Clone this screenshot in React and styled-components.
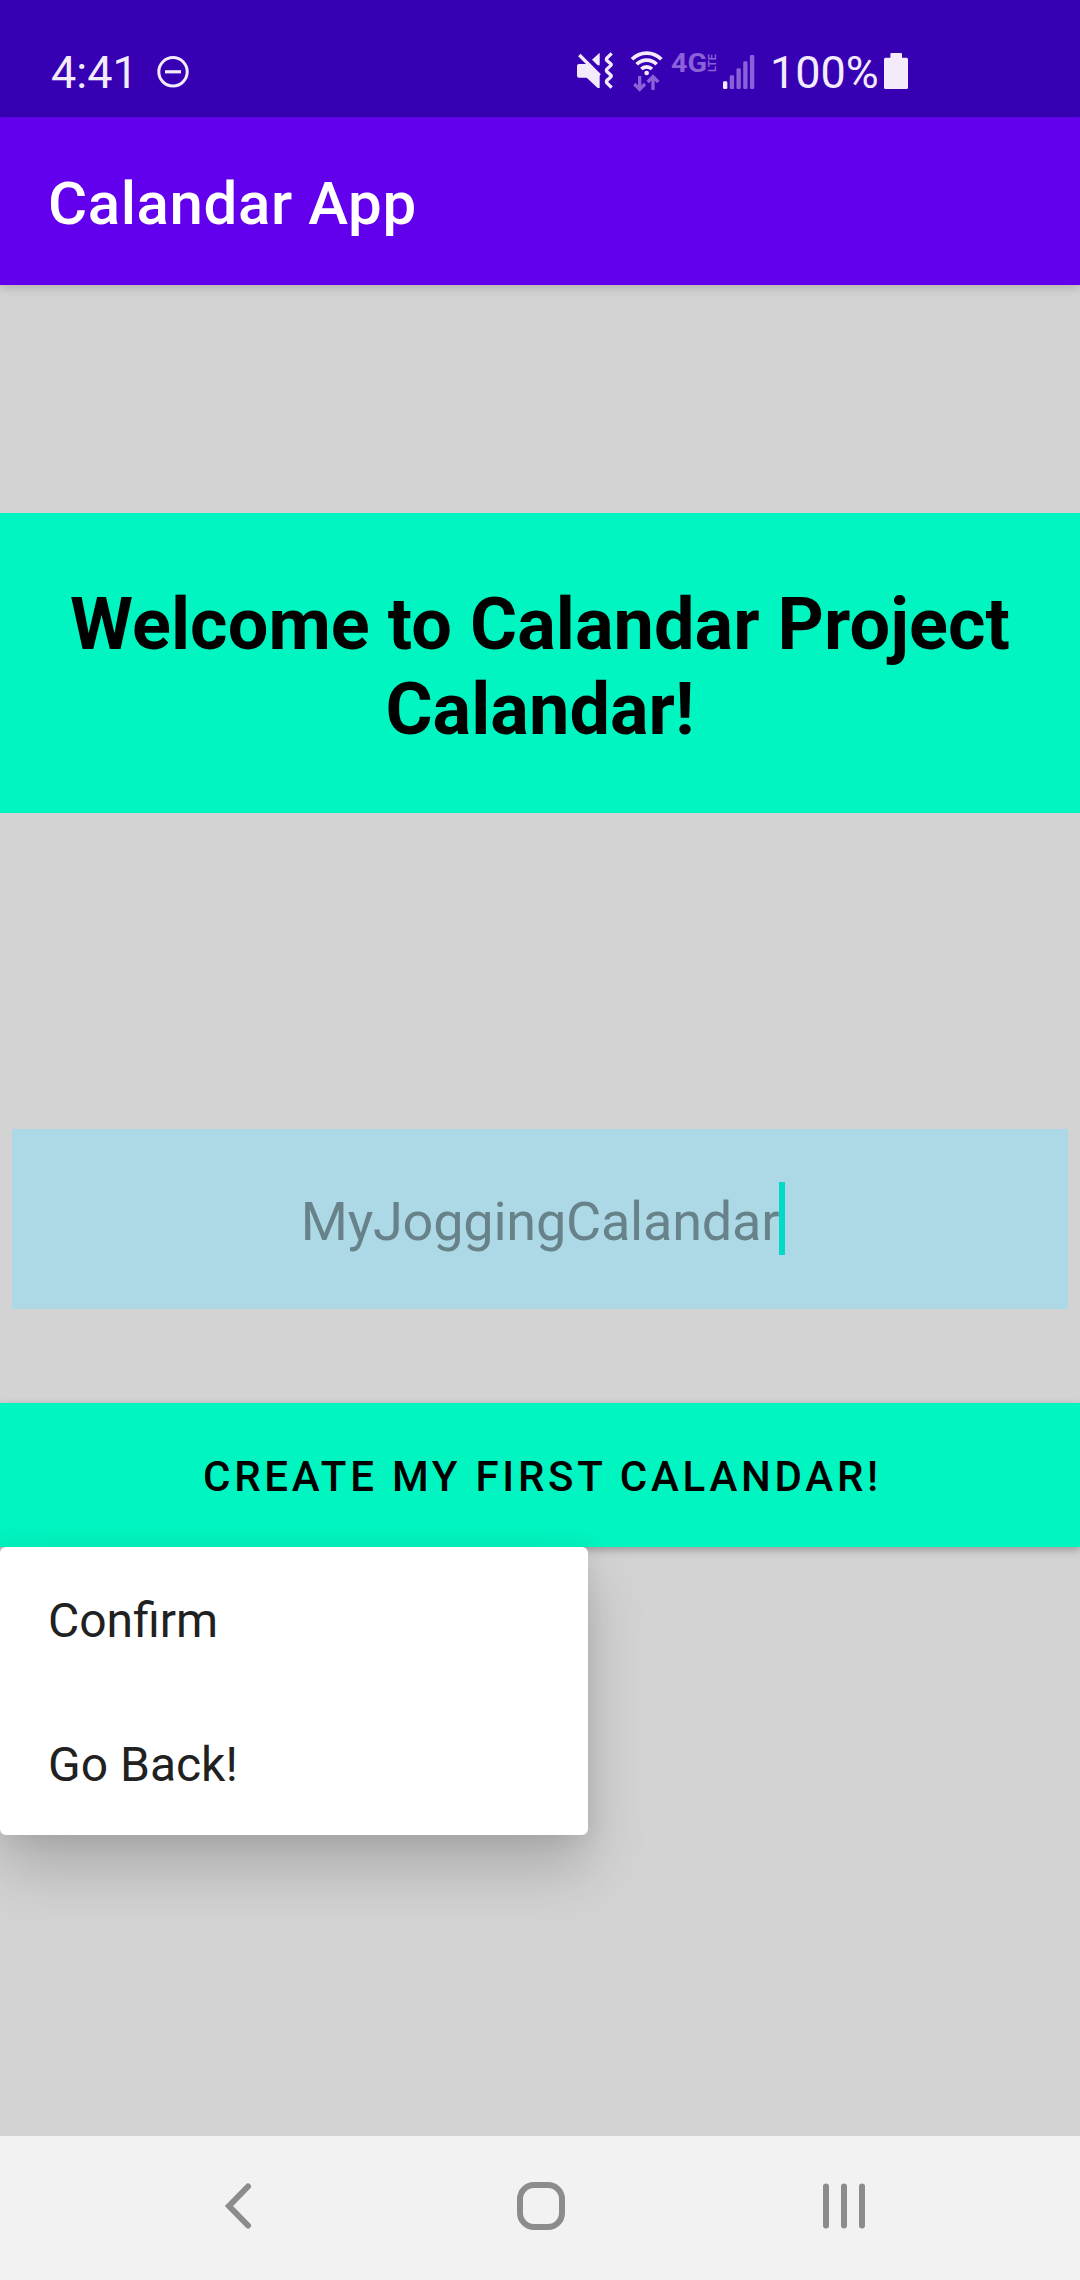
import React from "react";
import styled, { createGlobalStyle } from "styled-components";

const Global = createGlobalStyle`
  *, *::before, *::after { box-sizing: border-box; }
  body { margin: 0; background: #d3d3d3; }
  button { font: inherit; border: 0; margin: 0; }
`;

const Screen = styled.div`
  width: 1080px;
  height: 2280px;
  display: flex;
  flex-direction: column;
  overflow: hidden;
  background: #d3d3d3;
  font-family: Roboto, "Noto Sans", sans-serif;
`;

const StatusBar = styled.header`
  flex: none;
  height: 117px;
  padding: 27px 172px 0 51px;
  display: flex;
  align-items: center;
  justify-content: space-between;
  background: #3700b3;
  color: #f3ebfc;
  font-size: 45px;
  line-height: 53px;
`;

const StatusGroup = styled.div`
  display: flex;
  align-items: center;
`;

const StatusIcon = styled.svg`
  display: block;
  flex: none;
  width: ${(p) => p.$w}px;
  height: 48px;
  margin-left: ${(p) => p.$gap || 0}px;
  overflow: visible;
`;

const StatusText = styled.span`
  width: ${(p) => p.$w}px;
  margin-left: ${(p) => p.$gap || 0}px;
  white-space: nowrap;
`;

const AppBar = styled.div`
  flex: none;
  position: relative;
  height: 168px;
  padding: 5px 48px 0;
  display: flex;
  align-items: center;
  background: #6200ee;
  box-shadow: 0 3px 9px rgba(0, 0, 0, 0.16);
`;

const AppTitle = styled.h1`
  margin: 0;
  color: #fff;
  font-size: 60px;
  line-height: 70px;
  font-weight: 500;
  letter-spacing: 0.6px;
`;

const Content = styled.main`
  flex: 1;
  display: flex;
  flex-direction: column;
  padding-top: 228px;
`;

const Banner = styled.h2`
  flex: none;
  height: 300px;
  margin: 0;
  padding: 69px 48px 0;
  background: #00f5c0;
  color: #000;
  font-size: 72px;
  line-height: 85px;
  font-weight: 700;
  letter-spacing: 0.08px;
  text-align: center;
`;

const NameField = styled.div`
  flex: none;
  height: 180px;
  margin: 316px 12px 0;
  padding-top: 5px;
  display: flex;
  align-items: center;
  justify-content: center;
  background: #add8e6;
  color: #68828a;
  font-size: 54px;
  line-height: 64px;
  letter-spacing: -0.22px;
`;

const Caret = styled.span`
  width: 6px;
  height: 73px;
  margin: -7px -6px 0 0;
  background: #03dac5;
`;

const CreateArea = styled.div`
  flex: none;
  position: relative;
  margin-top: 94px;
`;

const CreateButton = styled.button`
  display: block;
  width: 100%;
  height: 144px;
  padding: 3px 0 0 5px;
  background: #00f5c0;
  color: #000;
  font-size: 42px;
  line-height: 50px;
  font-weight: 500;
  letter-spacing: 3.75px;
  text-align: center;
  box-shadow: 0 3px 8px rgba(0, 0, 0, 0.28);
`;

const Menu = styled.ul`
  position: absolute;
  top: 100%;
  left: 0;
  width: 588px;
  margin: 0;
  padding: 0;
  list-style: none;
  border-radius: 6px;
  background: #fff;
  box-shadow: 0 34px 60px rgba(0, 0, 0, 0.19), 0 3px 24px rgba(0, 0, 0, 0.08);
`;

const MenuItem = styled.li`
  height: 144px;
  padding: 3px 48px 0;
  display: flex;
  align-items: center;
  color: #212121;
  font-size: 48px;
  line-height: 56px;
`;

const NavBar = styled.nav`
  flex: none;
  height: 144px;
  padding: 0 211px;
  display: flex;
  align-items: center;
  justify-content: space-between;
  background: #f2f2f2;
`;

const NavButton = styled.button`
  width: 54px;
  height: 54px;
  padding: 0;
  margin-top: -4px;
  background: none;
`;

const NavGlyph = styled.svg`
  display: block;
  width: 54px;
  height: 54px;
  overflow: visible;
  fill: none;
  stroke: #8c8c8c;
  stroke-width: 6;
  stroke-linecap: round;
`;

const DIM = "#8a61d8";
const LIT = "#f3ebfc";

const DoNotDisturb = () => (
  <StatusIcon $w={32} $gap={15} viewBox="0 0 32 48" fill="none" stroke={LIT} strokeWidth="3">
    <circle cx="16" cy="23.8" r="14.2" />
    <path d="M8 23.8H24" strokeWidth="3.2" />
  </StatusIcon>
);

const MutedVibrate = () => (
  <StatusIcon $w={40} viewBox="48 39 120 144">
    <path fill={LIT} d="M57 87H78L84 84L119 120V159H113L80 128H57Q51 128 51 122V93Q51 87 57 87Z" />
    <path fill={LIT} d="M96 74L119 53V91L113 91Z" />
    <path d="M58 60L119 121" stroke={LIT} strokeWidth="10" fill="none" />
    <path
      d="M155 55L140 70Q138 73 140 76L152 86Q155 89 152 92L140 103Q138 106 140 109L152 120Q155 123 152 126L140 137Q138 140 140 143L155 158"
      stroke={LIT}
      strokeWidth="10"
      fill="none"
    />
  </StatusIcon>
);

const Wifi = () => (
  <StatusIcon $w={34} $gap={13} viewBox="207 39 102 144">
    <g fill="none" stroke={LIT} strokeWidth="11">
      <path d="M216 73A61 61 0 0 1 304 73" />
      <path d="M230 88A42 42 0 0 1 290 88" />
      <path d="M244 102A23 23 0 0 1 276 102" />
    </g>
    <circle cx="260" cy="114" r="7" fill={LIT} />
    <g fill="none" stroke={DIM} strokeWidth="10">
      <path d="M239 123V162M223 147L239 163L255 147" />
      <path d="M279 165V126M263 141L279 125L295 141" />
    </g>
  </StatusIcon>
);

const NetworkType = () => (
  <StatusIcon $w={46} $gap={8} viewBox="0 0 46 48" fill={DIM}>
    <text
      x="0"
      y="24"
      fontFamily="Roboto, sans-serif"
      fontSize="25"
      fontWeight="700"
      textLength="36"
      lengthAdjust="spacingAndGlyphs"
    >
      4G
    </text>
    <text
      transform="translate(45 24) rotate(-90)"
      fontFamily="Roboto, sans-serif"
      fontSize="11"
      fontWeight="700"
      textLength="18"
      lengthAdjust="spacingAndGlyphs"
    >
      LTE
    </text>
  </StatusIcon>
);

const Signal = () => (
  <StatusIcon $w={32} $gap={6} viewBox="490 39 96 144">
    {[139, 121, 100, 79, 60].map((y, i) => (
      <rect key={y} x={490 + i * 20.2} y={y} width="13" height={162 - y} rx="4" fill={i ? DIM : LIT} />
    ))}
  </StatusIcon>
);

const Battery = () => (
  <StatusIcon $w={24} $gap={6} viewBox="0 0 24 48" fill={LIT}>
    <rect x="0" y="9.7" width="24" height="31.3" rx="1.5" />
    <rect x="6.4" y="5" width="11.6" height="7" rx="1" />
  </StatusIcon>
);

export default function App() {
  return (
    <>
      <Global />
      <Screen>
        <StatusBar>
          <StatusGroup>
            <StatusText $w={91}>4:41</StatusText>
            <DoNotDisturb />
          </StatusGroup>
          <StatusGroup>
            <MutedVibrate />
            <Wifi />
            <NetworkType />
            <Signal />
            <StatusText $w={108} $gap={15}>100%</StatusText>
            <Battery />
          </StatusGroup>
        </StatusBar>
        <AppBar>
          <AppTitle>Calandar App</AppTitle>
        </AppBar>
        <Content>
          <Banner>Welcome to Calandar Project Calandar!</Banner>
          <NameField>
            <span>MyJoggingCalandar</span>
            <Caret />
          </NameField>
          <CreateArea>
            <CreateButton>CREATE MY FIRST CALANDAR!</CreateButton>
            <Menu>
              <MenuItem>Confirm</MenuItem>
              <MenuItem>Go Back!</MenuItem>
            </Menu>
          </CreateArea>
        </Content>
        <NavBar>
          <NavButton aria-label="Back">
            <NavGlyph viewBox="0 0 54 54">
              <path d="M37 7.5L18 27L37 46.5" />
            </NavGlyph>
          </NavButton>
          <NavButton aria-label="Home">
            <NavGlyph viewBox="0 0 54 54">
              <rect x="7" y="6" width="42" height="42" rx="14" />
            </NavGlyph>
          </NavButton>
          <NavButton aria-label="Recents">
            <NavGlyph viewBox="0 0 54 54">
              <path d="M11 7.5V46.5M29 7.5V46.5M47 7.5V46.5" />
            </NavGlyph>
          </NavButton>
        </NavBar>
      </Screen>
    </>
  );
}
